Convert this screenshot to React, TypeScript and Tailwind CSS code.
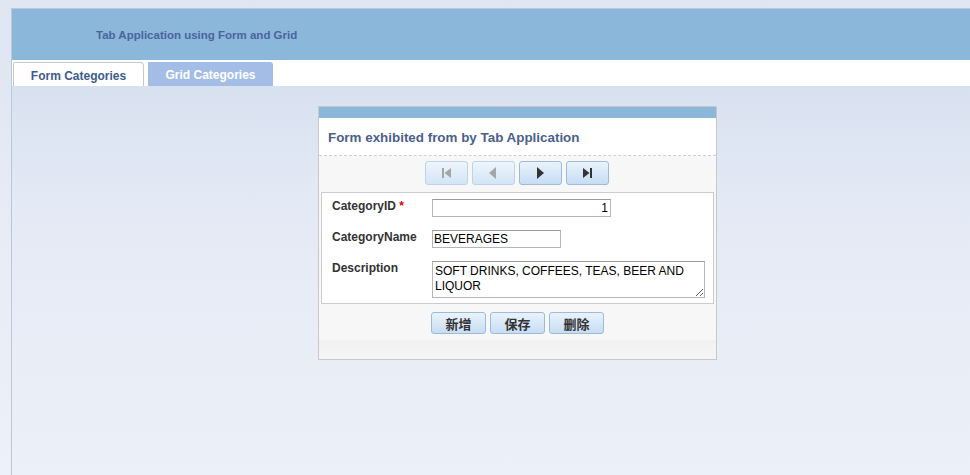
import React from "react";

const font = { fontFamily: '"Liberation Sans", Arial, sans-serif' };

const NavButton = ({ disabled, children }: { disabled?: boolean; children: React.ReactNode }) => (
    <button
        className={
            disabled
                ? "w-[43px] h-[24px] rounded-[3px] border border-[#bcd3ea] bg-[linear-gradient(#eef5fc,#d3e5f6)] flex items-center justify-center text-[#a5a5a5]"
                : "w-[43px] h-[24px] rounded-[3px] border border-[#9dbbd9] bg-[linear-gradient(#eaf3fc,#c6ddf3)] flex items-center justify-center text-[#333]"
        }
    >
        {children}
    </button>
);

const ActionButton = ({ label }: { label: string }) => (
    <button
        className="w-[55px] h-[22px] rounded-[3px] border border-[#9dbbd9] bg-[linear-gradient(#eaf3fc,#c6ddf3)] text-[13px] font-bold text-[#333] leading-none"
        style={{ fontFamily: '"Noto Sans CJK SC", "Liberation Sans", sans-serif' }}
    >
        {label}
    </button>
);

export default function App() {
    return (
        <div
            className="w-full min-h-[475px] pl-[11px] pt-[8px] bg-[linear-gradient(#dfe5f1,#e6ebf5_200px,#edf1f9)] text-[12px]"
            style={font}
        >
            <div className="min-h-[467px] border-l border-t border-[#b9c9dc] flex flex-col">
                {/* header */}
                <div className="h-[51px] bg-[#8ab7da] flex items-center pl-[84px] pt-[3px]">
                    <span className="text-[11.5px] font-bold text-[#4a64a0]">Tab Application using Form and Grid</span>
                </div>

                {/* tabs */}
                <div className="h-[26px] bg-white flex items-end pl-[1px] gap-[4px]">
                    <div className="w-[131px] h-[24px] border border-b-0 border-[#c8c8c8] rounded-tr-[4px] rounded-tl-[2px] bg-white flex items-center justify-center pt-[2px] font-bold text-[#3d5a8e]">
                        Form Categories
                    </div>
                    <div className="w-[125px] h-[24px] rounded-tr-[3px] bg-[#a4bde6] flex items-center justify-center pt-[2px] font-bold text-white">
                        Grid Categories
                    </div>
                </div>

                {/* body */}
                <div className="flex-1 bg-[linear-gradient(#d8e1f0,#e4eaf5_120px,#ecf0f8)] pt-[20px] pl-[306px]">
                    <div className="w-[399px] border border-[#c8c8c8] bg-[#f7f7f7] flex flex-col">
                        <div className="h-[11px] bg-[#8ab7da]" />
                        <div className="h-[38px] bg-white border-b border-dashed border-[#cfcfcf] flex items-center pl-[9px] pt-[4px]">
                            <span className="text-[13.4px] font-bold text-[#4b5f8c]">Form exhibited from by Tab Application</span>
                        </div>

                        {/* navigation */}
                        <div className="flex justify-center gap-[4px] pt-[5px] pb-[7px] pr-[2px]">
                            <NavButton disabled>
                                <svg width="11" height="12" viewBox="0 0 11 12">
                                    <rect x="1" y="1" width="2" height="10" fill="currentColor" />
                                    <path d="M10 1 L3.5 6 L10 11 Z" fill="currentColor" />
                                </svg>
                            </NavButton>
                            <NavButton disabled>
                                <svg width="10" height="14" viewBox="0 0 10 14">
                                    <path d="M8 1 L1 7 L8 13 Z" fill="currentColor" />
                                </svg>
                            </NavButton>
                            <NavButton>
                                <svg width="10" height="14" viewBox="0 0 10 14">
                                    <path d="M2 1 L9 7 L2 13 Z" fill="currentColor" />
                                </svg>
                            </NavButton>
                            <NavButton>
                                <svg width="11" height="12" viewBox="0 0 11 12">
                                    <path d="M1 1 L7.5 6 L1 11 Z" fill="currentColor" />
                                    <rect x="8" y="1" width="2" height="10" fill="currentColor" />
                                </svg>
                            </NavButton>
                        </div>

                        {/* fields */}
                        <div className="mx-[2px] border border-[#cccccc] bg-white pt-[6px] pb-[5px] pl-[10px] flex flex-col gap-[13px]">
                            <div className="flex items-start">
                                <label className="w-[100px] font-bold text-[#333] leading-[14px]">
                                    CategoryID <span className="text-[#d00]">*</span>
                                </label>
                                <input
                                    readOnly
                                    value="1"
                                    className="w-[179px] h-[18px] border border-[#b5b5b5] border-t-[#9a9a9a] text-right pr-[2px] text-[12px] text-black outline-none"
                                    style={font}
                                />
                            </div>
                            <div className="flex items-start">
                                <label className="w-[100px] font-bold text-[#333] leading-[14px]">CategoryName</label>
                                <input
                                    readOnly
                                    value="BEVERAGES"
                                    className="w-[129px] h-[18px] border border-[#b5b5b5] border-t-[#9a9a9a] pl-[1px] text-[12px] text-black outline-none"
                                    style={font}
                                />
                            </div>
                            <div className="flex items-start">
                                <label className="w-[100px] font-bold text-[#333] leading-[14px]">Description</label>
                                <textarea
                                    readOnly
                                    value="SOFT DRINKS, COFFEES, TEAS, BEER AND LIQUOR"
                                    className="w-[273px] h-[37px] border border-[#b5b5b5] border-t-[#9a9a9a] px-[2px] pt-[2px] text-[12px] leading-[15px] text-black outline-none resize-y"
                                    style={font}
                                />
                            </div>
                        </div>

                        {/* actions */}
                        <div className="flex justify-center gap-[4px] pt-[8px] pb-[6px]">
                            <ActionButton label="新增" />
                            <ActionButton label="保存" />
                            <ActionButton label="删除" />
                        </div>
                        <div className="h-[19px] bg-[linear-gradient(#f1f1f1,#f5f5f5)]" />
                    </div>
                </div>
            </div>
        </div>
    );
}
